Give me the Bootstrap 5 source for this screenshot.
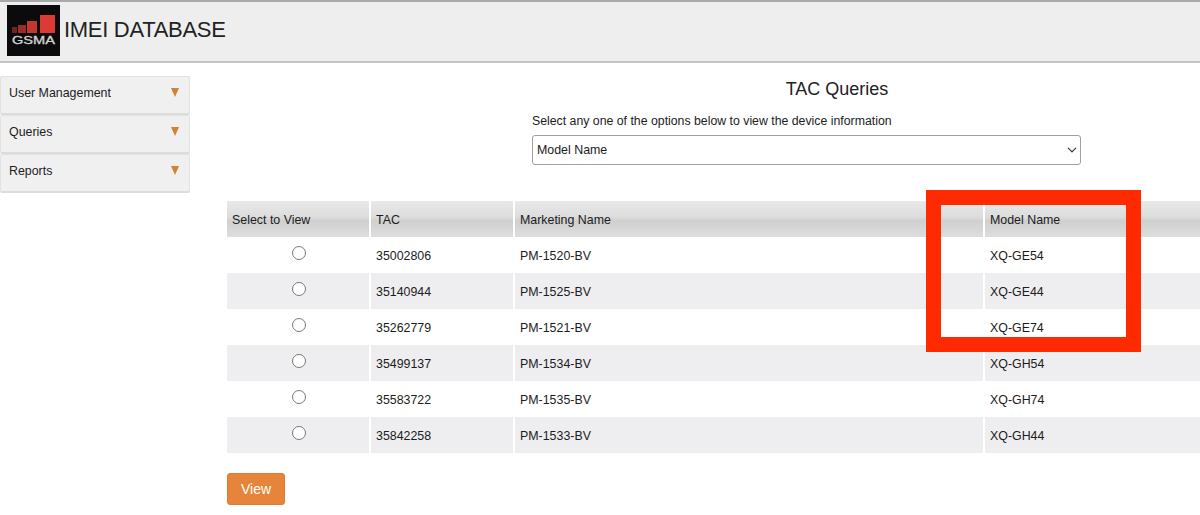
<!DOCTYPE html>
<html lang="en">
<head>
    <meta charset="UTF-8">
    <meta name="viewport" content="width=device-width, initial-scale=1.0">
    <title>TAC Queries</title>
    <link rel="stylesheet" href="https://cdn.jsdelivr.net/npm/bootstrap@5.3.0/dist/css/bootstrap.min.css">
    <style>
        html, body { height: 515px; overflow: hidden; }
        body { font-family: "Liberation Sans", Arial, sans-serif; font-size: 12.4px; color: #1c1c1c; position: relative; background: #fff; }
        .top-head { height: 63px; background: #eeeeee; border-top: 2px solid #a9a9a9; border-bottom: 2px solid #c4c4c4; padding: 3px 0 5px 7px; }
        .top-head svg { display: block; width: 53px; height: 51px; }
        .top-head h1 { font-size: 22px; line-height: 1; margin: 0 0 0 4px; padding-bottom: 1px; color: #222; letter-spacing: -.3px; font-weight: 400; }
        .side-menu { width: 190px; flex: none; margin-top: 13px; }
        .side-item { height: 39px; background: #f0f0f0; border: 1px solid #e2e2e2; border-bottom: 2px solid #dcdcdc; padding: 0 9px 4px 8px; color: #1c1c1c; border-radius: 2px; }
        .side-arrow { width: 0; height: 0; border-left: 4.5px solid transparent; border-right: 4.5px solid transparent; border-top: 9px solid #cf8238; margin-right: 1px; margin-top: -1px; }
        .main-area { margin-left: 37px; flex: 1; min-width: 0; padding-top: 14px; }
        .page-title { font-size: 18px; line-height: 24px; margin: 0 0 12px; padding-left: 247px; color: #222; font-weight: 400; text-align: center; }
        .picker { margin-left: 305px; width: 549px; }
        .picker label { display: block; line-height: 16px; margin-bottom: 6px; font-size: 12.3px; }
        .picker .form-select { height: 30px; font-size: 12.4px; padding: 0 30px 0 4px; color: #1c1c1c; border: 1px solid #a0a0a0; border-radius: 3px; background-position: right 3px center; background-size: 10px 10px; }
        .tac-table { width: 990px; margin: 36px 0 0; table-layout: fixed; border-collapse: separate; border-spacing: 0; font-size: 12.4px; }
        .tac-table th, .tac-table td { padding: 2px 5px 0; border: 0; border-right: 2px solid #fff; vertical-align: middle; font-weight: 400; color: #1c1c1c; box-shadow: none; }
        .tac-table th { height: 36px; background: linear-gradient(#e9e9e9, #dcdcdc 45%, #cfcfcf 55%, #dedede); }
        .tac-table td { height: 36px; background: #fff; }
        .tac-table td.radio-cell { padding-left: 7px; }
        .tac-table tbody tr:nth-child(even) td { background: #eeeef0; }
        .tac-table .form-check-input { width: 14px; height: 14px; margin: 0 0 6px; border: 1px solid #777; background-color: #fff; float: none; vertical-align: middle; }
        .view-btn { margin-top: 20px; width: 58px; height: 32px; padding: 0; font-size: 14px; background: #e5843a; border: 1px solid #dd7d35; color: #fff; border-radius: 3px; }
        .red-box { position: absolute; left: 926px; top: 190px; width: 215px; height: 162px; border: 15px solid #ff2a00; pointer-events: none; }
    </style>
</head>
<body>
    <header class="top-head d-flex align-items-center">
        <svg viewBox="0 0 53 51" role="img" aria-label="GSMA logo">
            <rect width="53" height="51" fill="#0b0b0d"/>
            <rect x="5" y="22" width="5" height="6" fill="#6e2420"/>
            <rect x="11" y="20" width="8" height="8" fill="#9a2d27"/>
            <rect x="20" y="16" width="10" height="12" fill="#c4352c"/>
            <rect x="33" y="10" width="15" height="18" fill="#dc3a32"/>
            <text x="5" y="38.5" font-family="Liberation Sans, Arial, sans-serif" font-size="10" font-weight="400" fill="#d2d2d2" stroke="#d2d2d2" stroke-width=".3" textLength="43" lengthAdjust="spacingAndGlyphs">GSMA</text>
        </svg>
        <h1>IMEI DATABASE</h1>
    </header>

    <div class="d-flex">
        <nav class="side-menu">
            <div class="side-item d-flex align-items-center justify-content-between"><span>User Management</span><span class="side-arrow"></span></div>
            <div class="side-item d-flex align-items-center justify-content-between"><span>Queries</span><span class="side-arrow"></span></div>
            <div class="side-item d-flex align-items-center justify-content-between"><span>Reports</span><span class="side-arrow"></span></div>
        </nav>

        <main class="main-area">
            <h2 class="page-title">TAC Queries</h2>
            <div class="picker">
                <label for="query_type">Select any one of the options below to view the device information</label>
                <select class="form-select" id="query_type">
                    <option>Model Name</option>
                </select>
            </div>

            <table class="table tac-table">
                <colgroup>
                    <col style="width: 144px">
                    <col style="width: 144px">
                    <col style="width: 470px">
                    <col>
                </colgroup>
                <thead>
                    <tr><th>Select to View</th><th>TAC</th><th>Marketing Name</th><th>Model Name</th></tr>
                </thead>
                <tbody>
                    <tr><td class="text-center radio-cell"><input class="form-check-input" type="radio" name="tac"></td><td>35002806</td><td>PM-1520-BV</td><td>XQ-GE54</td></tr>
                    <tr><td class="text-center radio-cell"><input class="form-check-input" type="radio" name="tac"></td><td>35140944</td><td>PM-1525-BV</td><td>XQ-GE44</td></tr>
                    <tr><td class="text-center radio-cell"><input class="form-check-input" type="radio" name="tac"></td><td>35262779</td><td>PM-1521-BV</td><td>XQ-GE74</td></tr>
                    <tr><td class="text-center radio-cell"><input class="form-check-input" type="radio" name="tac"></td><td>35499137</td><td>PM-1534-BV</td><td>XQ-GH54</td></tr>
                    <tr><td class="text-center radio-cell"><input class="form-check-input" type="radio" name="tac"></td><td>35583722</td><td>PM-1535-BV</td><td>XQ-GH74</td></tr>
                    <tr><td class="text-center radio-cell"><input class="form-check-input" type="radio" name="tac"></td><td>35842258</td><td>PM-1533-BV</td><td>XQ-GH44</td></tr>
                </tbody>
            </table>

            <button type="button" class="btn view-btn">View</button>
        </main>
    </div>

    <div class="red-box"></div>

    <script src="https://cdn.jsdelivr.net/npm/bootstrap@5.3.0/dist/js/bootstrap.bundle.min.js"></script>
</body>
</html>
